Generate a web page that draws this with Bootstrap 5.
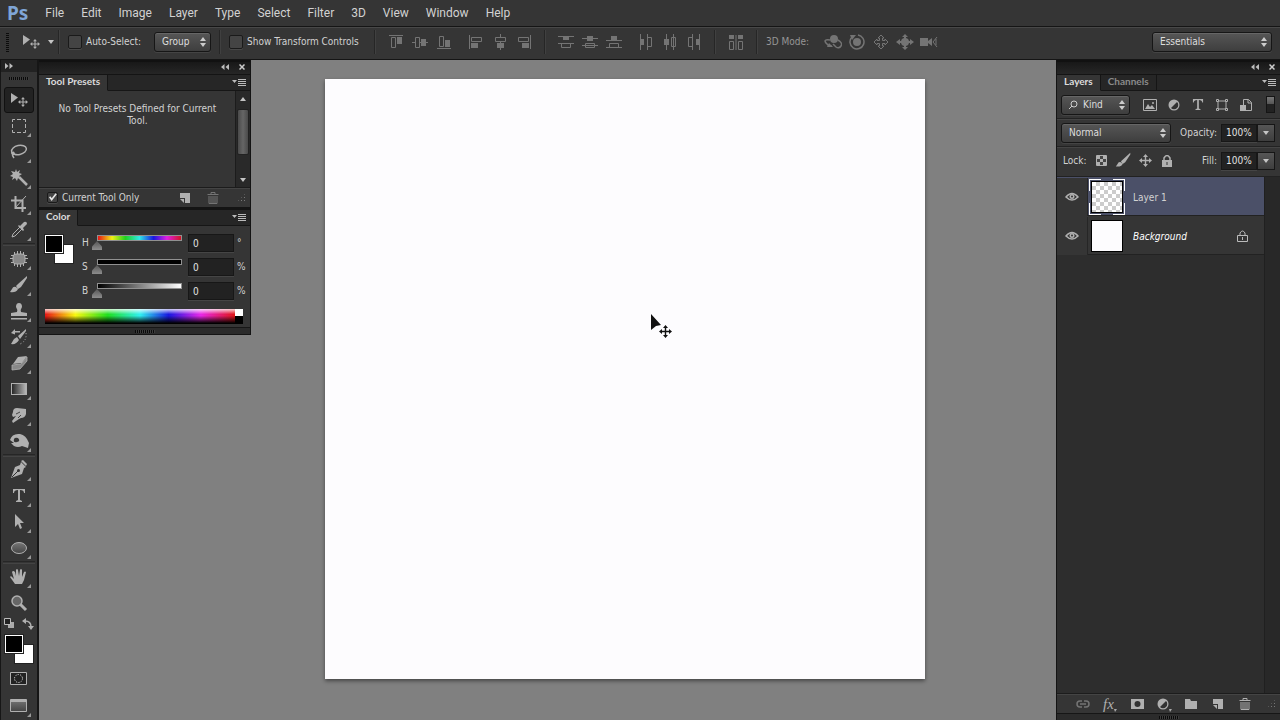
<!DOCTYPE html>
<html lang="en">
<head>
<meta charset="utf-8">
<meta name="viewport" content="width=device-width, initial-scale=1">
<title>Photoshop</title>
<link href="https://cdn.jsdelivr.net/npm/bootstrap@5.3.0/dist/css/bootstrap.min.css" rel="stylesheet">
<style>
:root{--ui:#353535;--lite:#484848;--ink:#d2d2d2;--ico:#b0b0b0}
body{font:10px/12px "DejaVu Sans Condensed","Noto Sans",sans-serif;color:var(--ink);background:#808080}
button{color:inherit}
svg{display:block;flex:none}
.app-menu{background:var(--ui);height:26px;gap:17px;padding:0 7px;font:12px/16px Roboto,"Noto Sans",sans-serif}
.app-menu a{color:var(--ink)}
.ps-logo{font:bold 19px/24px "Noto Sans",sans-serif;color:#7fa5d6}
.options-bar{background:var(--ui);height:34px;border-top:1px solid #151515;border-bottom:1px solid #151515;box-shadow:inset 0 1px var(--lite);padding:0 8px 2px 6px}
.grip-v{width:3px;height:19px;background:repeating-linear-gradient(#0c0c0c 0 1px,var(--ui) 1px 2px)}
.grip-h{width:20px;height:3px;background:repeating-linear-gradient(90deg,#0a0a0a 0 1px,#3c3c3c 1px 2px)}
.sep-v{width:2px;height:24px;background:#262626;border-right:1px solid #404040}
.ibtn{border:0;background:none;padding:0;display:flex;align-items:center;justify-content:center;width:24px;height:24px;color:var(--ico)}
.ibtn-dim{color:#747474}
.ibtn-lock{width:22px}
.move-btn{width:45px;gap:4px}
.auto-label{width:68px}
.group-select{width:57px}
.transform-label{width:127px}
.mode-label{width:55px;color:#969696}
.space-select{width:120px}
.blend-select{width:110px}
.ps-check{appearance:none;width:14px;height:14px;margin:0;border:1px solid #1a1a1a;border-radius:2px;background:#444;box-shadow:0 1px #484848}
.ps-check.small-box{width:11px;height:11px;background:#4a4a4a}
.ps-check:checked{background:#444 url("data:image/svg+xml,%3Csvg xmlns='http://www.w3.org/2000/svg' viewBox='0 0 11 11'%3E%3Cpath d='M2 4.5 4.5 8 10 1' fill='none' stroke='%23e4e4e4' stroke-width='2'/%3E%3C/svg%3E") center/contain}
.ps-select{appearance:none;height:20px;border:1px solid #161616;border-radius:3px;color:#dedede;font:inherit;padding:0 18px 0 7px;box-shadow:0 1px #444,inset 0 1px #666;background:url("data:image/svg+xml,%3Csvg xmlns='http://www.w3.org/2000/svg' width='6' height='10'%3E%3Cpath d='M0 4 3 0l3 4zM0 6h6L3 10z' fill='%23ccc'/%3E%3C/svg%3E") right 4px center/6px 10px no-repeat,linear-gradient(#565656,#3e3e3e)}
.toolbox{width:39px;background:var(--ui);border-left:1px solid #161616;border-right:2px solid #161616}
.toolbox-head{height:12px;background:#222;padding-left:4px}
.toolbox-grip{height:15px;padding-bottom:3px}
.tool{border:1px solid transparent;border-radius:3px;background:none;padding:0;width:30px;height:26px;display:flex;align-items:center;justify-content:center;color:var(--ico)}
.tool.active{background:#222;border-color:#111}
.sep-h{height:3px;width:32px;border-bottom:1px solid #444;border-top:1px solid #262626}
.swap-row{width:30px;height:19px;padding-bottom:4px}
.swatches{display:grid;grid-template-columns:10px 8px 10px;grid-template-rows:10px 8px 10px;justify-content:center}
.tool-chips{margin-bottom:3px}
.chip{border:1px solid #fff;outline:1px solid #222;background:#fff}
.chip-bg{grid-area:2/2/4/4}
.chip-fg{grid-area:1/1/3/3;background:#000;z-index:1}
.float-col{width:212px}
.ps-panel{background:var(--ui);border:1px solid #141414;border-top:0;border-left:0}
.ps-panel + .ps-panel{border-top:1px solid #141414}
.ps-panel-head{height:14px;background:linear-gradient(#181818,#262626);border-top:2px solid #111;padding:0 5px 2px 0;gap:10px}
.tabs-row{background:#262626;height:17px;border-top:1px solid #141414}
.tabs-row .nav-link{color:#8b8b8b;padding:0 7px 2px;font:bold 10px/13px Lato,sans-serif;border-radius:0;border-right:1px solid #151515;border-bottom:1px solid #161616;background:#262626}
.tabs-row .nav-link.active{background:var(--ui);color:#dcdcdc;border-bottom-color:var(--ui)}
.tabs-fill{border-bottom:1px solid #161616}
.preset-area{height:96px}
.preset-msg{padding:12px 12px 0 13px}
.scroller{width:16px;background:#292929;border-left:1px solid #1c1c1c;padding:6px 0 5px}
.scroll-thumb{width:12px;height:46px;border-radius:2px;background:linear-gradient(90deg,#4a4a4a,#666,#4a4a4a);border:1px solid #222}
.panel-foot{height:20px;border-top:1px solid #1c1c1c;box-shadow:inset 0 1px #444}
.color-body{padding:5px 3px 1px 6px}
.color-top{gap:9px}
.hsb{display:grid;grid-template-columns:9px 95px 46px 10px;column-gap:1px;align-items:center}
.hsb-row{display:grid;grid-template-columns:subgrid;grid-column:1/-1;height:24px;align-items:center}
.unit{padding-left:2px}
.ramp{appearance:none;background:none;width:95px;height:16px;margin:0;padding:0}
.ramp::-webkit-slider-runnable-track{height:16px;background:var(--ramp) 6px 1px/calc(100% - 12px) 4px no-repeat,linear-gradient(#919191,#919191) 5px 0/calc(100% - 10px) 6px no-repeat}
.ramp::-webkit-slider-thumb{-webkit-appearance:none;width:10px;height:9px;margin-top:6px;background:linear-gradient(#555,#8d8d8d);clip-path:polygon(50% 0,100% 60%,100% 100%,0 100%,0 60%)}
.num{background:#222;color:#e2e2e2;border:1px solid #171717;box-shadow:0 1px #454545;height:18px;font:inherit;padding:0 4px;min-width:0}
.num-pct{width:36px}
.hue{--ramp:linear-gradient(90deg,#e81515,#f0f015 17%,#20d020 33%,#30e8e8 50%,#1818e0 67%,#e020e0 83%,#d01525)}
.sat{--ramp:linear-gradient(#000,#000)}
.bri{--ramp:linear-gradient(90deg,#000,#fff)}
.spectrum-row{margin:6px 4px 2px 0}
.spectrum{height:15px;background:linear-gradient(#fffc,#fff0 35%,#0000 45%,#000 95%),linear-gradient(90deg,#e81515,#f8f810 16%,#20e020 33%,#30f0f0 50%,#1818e0 65%,#e828e8 82%,#e01515)}
.bw{width:8px;background:linear-gradient(#fff 50%,#000 50%)}
.panel-grip{height:7px;border-top:1px solid #161616;background:#2b2b2b}
.workspace{padding:19px 57px 40px 0}
.artboard{width:600px;max-width:100%;aspect-ratio:1;background:#fdfcfe;box-shadow:0 2px 4px #0007}
.pointer{position:absolute;left:54%;top:39%}
.layers-dock{width:224px;background:var(--ui);border-left:1px solid #141414}
.row-line{height:28px;padding:0 5px 0 4px;border-bottom:1px solid #222;box-shadow:0 1px #444}
.row-last{height:30px;padding-bottom:2px}
.lock-label{width:29px;padding-left:2px}
.kind-select{width:69px;padding-left:21px}
.layer{height:39px;border-bottom:1px solid #222;padding-top:1px}
.layer.selected{background:#4b5068}
.layer-plain{background:#353535}
.eye-cell{width:31px;height:38px;background:var(--ui);border-right:1px solid #262626}
.layer-name{padding-top:3px}
.thumb-frame{width:36px;height:36px;padding:2px;margin:0 8px 0 1px}
.selected .thumb-frame{background:linear-gradient(#fff,#fff) 0 0/12px 1px,linear-gradient(#fff,#fff) 0 0/1px 12px,linear-gradient(#fff,#fff) 100% 0/12px 1px,linear-gradient(#fff,#fff) 100% 0/1px 12px,linear-gradient(#fff,#fff) 0 100%/12px 1px,linear-gradient(#fff,#fff) 0 100%/1px 12px,linear-gradient(#fff,#fff) 100% 100%/12px 1px,linear-gradient(#fff,#fff) 100% 100%/1px 12px;background-repeat:no-repeat}
.layer-thumb{width:32px;height:32px;border:1px solid #000;background:#fdfcfe}
.checker{background:repeating-conic-gradient(#ccc 0 25%,#fff 0 50%) 0 0/8px 8px}
.layer-track{width:16px;background:#282828;border-left:1px solid #202020}
.layer-list{background:#2d2d2d}
.drop{width:18px;height:18px;border:1px solid #161616;background:linear-gradient(#565656,#3e3e3e);padding:0;display:flex;align-items:center;justify-content:center}
.dots{width:9px;height:9px;background:radial-gradient(circle,#777 1px,#0000 1px) 0 0/3px 3px;clip-path:polygon(100% 0,100% 100%,0 100%)}
.filter-switch{width:9px;height:17px;background:linear-gradient(#777,#555 7px,#222 7px);border:1px solid #151515;padding:0}
.foot-tools{gap:3px;padding-left:14px}
.fx{font:italic 15px/16px "Liberation Serif",serif}
</style>
</head>
<body class="d-flex flex-column min-vh-100">
<svg width="0" height="0" class="position-absolute" aria-hidden="true">
<defs>
<linearGradient id="gr"><stop stop-color="#222"/><stop offset="1" stop-color="#bbb"/></linearGradient>
<linearGradient id="gv" x2="0" y2="1"><stop stop-color="#777"/><stop offset="1" stop-color="#444"/></linearGradient>
<symbol id="cross" viewBox="0 0 13 13"><path d="M6.500 0 9 3H7.200v2.800H10V4l3 2.500L10 9V7.200H7.200V10H9l-2.500 3L4 10h1.800V7.200H3V9L0 6.500 3 4v1.800h2.800V3H4z" fill="currentColor"/></symbol>
<symbol id="tri" viewBox="0 0 4 4"><path d="M4 0v4H0z" fill="#999"/></symbol>
<symbol id="move" viewBox="0 0 26 26"><path d="M5 6v10l7-5.500z" fill="currentColor"/><use href="#cross" x="12" y="10" width="10" height="10"/></symbol>
<symbol id="marquee" viewBox="0 0 26 26"><path d="M6.500 9V6.500H9m2 0h4m2 0h2.500V9m0 2v4m0 2v2.500H17m-2 0h-4m-2 0H6.500V17m0-2v-4" fill="none" stroke="currentColor"/><use href="#tri" x="21" y="20" width="4" height="4"/></symbol>
<symbol id="lasso" viewBox="0 0 26 26"><g fill="none" stroke="currentColor" stroke-width="1.500"><ellipse cx="13" cy="11" rx="7.500" ry="4.500" transform="rotate(-12 13 11)"/><path d="M6 13c-1 3 3 3 2 1s-3 1 0 5"/></g><use href="#tri" x="21" y="20" width="4" height="4"/></symbol>
<symbol id="wand" viewBox="0 0 26 26"><path d="m10 4 1 3 3-2-1 3 3 1-3 2 1 3-2-1-1 3-2-3-3 2 1-3-3-1 3-2-2-3 4 1z" fill="currentColor"/><path d="m13 12 8 8" stroke="currentColor" stroke-width="2.500"/><use href="#tri" x="21" y="20" width="4" height="4"/></symbol>
<symbol id="crop" viewBox="0 0 26 26"><path d="M9.500 5v12H20M5 9.500h11.500V21" fill="none" stroke="currentColor" stroke-width="2"/><path d="m9 17 11-12" stroke="currentColor"/><use href="#tri" x="21" y="20" width="4" height="4"/></symbol>
<symbol id="dropper" viewBox="0 0 26 26"><path d="m14 9 4-4q3-1 3 2l-4 4 1 2-1 1-5-5 1-1z" fill="currentColor"/><path d="m14 10-7 7-1 3 3-1 7-7" fill="none" stroke="currentColor"/><use href="#tri" x="21" y="20" width="4" height="4"/></symbol>
<symbol id="heal" viewBox="0 0 26 26"><path d="M8.500 6v14m3-15v16m3-16v16m3-15v14M5 9.500h16m-17 3h18M5 16.500h16" stroke="currentColor"/><rect x="7" y="8" width="12" height="10" rx="3" fill="#888" stroke="currentColor"/><use href="#tri" x="21" y="20" width="4" height="4"/></symbol>
<symbol id="brush" viewBox="0 0 26 26"><path d="m21 4-9 8-2 2 2 3 3-2 6-9zM10 15q-3-1-4 2l-2 3q6 1 8-3z" fill="currentColor"/><use href="#tri" x="21" y="20" width="4" height="4"/></symbol>
<symbol id="stamp" viewBox="0 0 26 26"><path d="M11 14q1-2-1-5 0-4 3-4t3 4q-2 3-1 5l6 1v3H5v-3zM5 20h16v1.500H5z" fill="currentColor"/><use href="#tri" x="21" y="20" width="4" height="4"/></symbol>
<symbol id="history" viewBox="0 0 26 26"><path d="m20 5-8 7 2 3 6-8zM11 13l2 3q-3 5-8 4l3-5zM5 9l4-4v2h5v1.500H9v2z" fill="currentColor"/><path d="M20 9q1 8-6 11" fill="none" stroke="currentColor" stroke-dasharray="1 2"/><use href="#tri" x="21" y="20" width="4" height="4"/></symbol>
<symbol id="eraser" viewBox="0 0 26 26"><path d="m12 7 9-1-5 7-9 1z" fill="currentColor"/><path d="m6 15 9-1 6-7v4l-7 8-8 1z" fill="#888" stroke="currentColor" stroke-width=".8"/><use href="#tri" x="21" y="20" width="4" height="4"/></symbol>
<symbol id="gradient" viewBox="0 0 26 26"><rect x="5.500" y="7.500" width="15" height="11" fill="url(#gr)" stroke="currentColor"/><use href="#tri" x="21" y="20" width="4" height="4"/></symbol>
<symbol id="smudge" viewBox="0 0 26 26"><path d="M7 10q0-4 4-4l9 1v5q-1 4-5 4l-2 1-6 4-1-2 4-5-3 1-1-2z" fill="currentColor"/><path d="m10 12 4-2m-2 6 3-3" stroke="#444"/><use href="#tri" x="21" y="20" width="4" height="4"/></symbol>
<symbol id="dodge" viewBox="0 0 26 26"><path fill-rule="evenodd" d="M4 12q2-7 10-6 6 1 9 9l-1 5-6-2q-4 2-8 0l-3-3 3 0zm4-1q-1 4 3 3 4-1 1-4-3-1-4 1z" fill="currentColor"/><use href="#tri" x="21" y="20" width="4" height="4"/></symbol>
<symbol id="pen" viewBox="0 0 26 26"><path d="m15 5 5 5-2 1-2 6-11 4 4-11 5-2zM17 3l4 4-1 2-5-5z" fill="currentColor"/><path d="m6 20 6-6" stroke="#333"/><circle cx="12.500" cy="13.500" r="1.500" fill="#333"/><use href="#tri" x="21" y="20" width="4" height="4"/></symbol>
<symbol id="type" viewBox="0 0 26 26"><path d="M7 6h12v4h-1q0-3-4-3v10l2 1v1h-6v-1l2-1V7q-4 0-4 3H7z" fill="currentColor"/></symbol>
<symbol id="select" viewBox="0 0 26 26"><path d="M9 5v13l3-3 2 5 2-1-2-5h4z" fill="currentColor"/><use href="#tri" x="21" y="20" width="4" height="4"/></symbol>
<symbol id="ellipse" viewBox="0 0 26 26"><ellipse cx="13" cy="13" rx="7.500" ry="5.500" fill="url(#gv)" stroke="currentColor"/><use href="#tri" x="21" y="20" width="4" height="4"/></symbol>
<symbol id="hand" viewBox="0 0 26 26"><path d="m9 20-5-7q1-2 3 1l1 1-2-7q1-2 3 0l1 4V6q1-2 2 0l1 6 1-6q1-2 2 0v7l2-5q1-1 2 0l-2 8-2 4z" fill="currentColor"/><use href="#tri" x="21" y="20" width="4" height="4"/></symbol>
<symbol id="zoomer" viewBox="0 0 26 26"><path d="m14 14 6 6" stroke="currentColor" stroke-width="3"/><circle cx="11" cy="11" r="5" fill="#666" stroke="currentColor" stroke-width="1.500"/></symbol>
<symbol id="mask" viewBox="0 0 26 26"><path d="M4.500 6.500h16v12h-16z" fill="#222" stroke="currentColor"/><circle cx="12.500" cy="12.500" r="4" fill="none" stroke="#ddd" stroke-dasharray="1.200 1.300"/></symbol>
<symbol id="screen" viewBox="0 0 26 26"><path d="M4.500 7.500h16v12h-16z" fill="url(#gv)" stroke="currentColor"/><path d="M4 9h17" stroke="currentColor" stroke-width="2"/><use href="#tri" x="21" y="21" width="4" height="4"/></symbol>
<symbol id="at" viewBox="0 0 16 16"><path d="M1 1.500h14M3.500 3.500h4v10h-4z" fill="none" stroke="currentColor"/><path d="M9 3h5v7H9z" fill="currentColor"/></symbol>
<symbol id="am" viewBox="0 0 16 16"><path d="M0 8.500h3m4 0h9M3.500 3.500h4v10h-4z" fill="none" stroke="currentColor"/><path d="M9 5h5v7H9z" fill="currentColor"/></symbol>
<symbol id="dist" viewBox="0 0 16 16"><path d="M0 2.500h16M0 9.500h16M3.500 9.500h9v4h-9z" fill="none" stroke="currentColor"/><path d="M5 2h6v4H5z" fill="currentColor"/></symbol>
<symbol id="distm" viewBox="0 0 16 16"><path d="M0 4.500h16M0 11.500h16M3.500 9.500h9v4h-9z" fill="none" stroke="currentColor"/><path d="M5 2h6v5H5z" fill="currentColor"/></symbol>
<symbol id="distb" viewBox="0 0 16 16"><path d="M0 6.500h16M0 13.500h16M3.500 9.500h9v4h-9z" fill="none" stroke="currentColor"/><path d="M5 2h6v5H5z" fill="currentColor"/></symbol>
<symbol id="auto" viewBox="0 0 16 16"><path d="M8 1v15M1.500 7.500h4v8h-4zm9 0h4v8h-4z" fill="none" stroke="currentColor"/><path d="M1 1h5v4H1zm9 0h5v4h-5z" fill="currentColor"/></symbol>
<symbol id="orbit" viewBox="0 0 18 16"><circle cx="10" cy="5" r="4" fill="currentColor"/><path d="M6 6Q-1 5 2 9t6 3m6-6q5 3 3 6t-5 1l-3-3" fill="none" stroke="currentColor" stroke-width="1.500"/><path d="M3 13h6l-4-4z" fill="currentColor"/></symbol>
<symbol id="roll" viewBox="0 0 18 16"><circle cx="9" cy="8" r="4" fill="currentColor"/><path d="M4 3a7 7 0 1 0 6-2" fill="none" stroke="currentColor" stroke-width="1.500"/><path d="M2 1h6L4 6z" fill="currentColor"/></symbol>
<symbol id="pan" viewBox="0 0 16 16"><path d="M8 1l3 3H9.500v2.500H12V5l3 3-3 3V9.500H9.500V12H11l-3 3-3-3h1.500V9.500H4V11L1 8l3-3v1.500h2.500V4H5z" fill="none" stroke="currentColor"/></symbol>
<symbol id="slide" viewBox="0 0 18 16"><circle cx="9" cy="8" r="4" fill="currentColor"/><path d="m9 0 3 3H6zm0 16 3-3H6zM0 8l4-3v6zm18 0-4-3v6z" fill="currentColor"/><path d="M2 8h14M9 2v12" stroke="currentColor" stroke-width="2"/></symbol>
<symbol id="cam" viewBox="0 0 18 16"><path d="M0 4h8v3l4-3v8L8 9v3H0z" fill="currentColor"/><path d="m17 3-4 5 4 5m-1-8v6" fill="none" stroke="currentColor"/></symbol>
<symbol id="menu" viewBox="0 0 14 9"><path d="M0 2h5L2.500 5z" fill="#bbb"/><path d="M6 1.500h8m-8 2h8m-8 2h8m-8 2h8" stroke="#bbb"/></symbol>
<symbol id="left2" viewBox="0 0 8 6"><path d="M3.500 0v6L0 3zM8 0v6L4.500 3z" fill="#bbb"/></symbol>
<symbol id="close" viewBox="0 0 6 6"><path d="m.5.5 5 5m0-5-5 5" stroke="#ccc" stroke-width="1.500"/></symbol>
<symbol id="page" viewBox="0 0 12 12"><path d="M1 1h10v10H6V6H1z" fill="currentColor"/><path d="M1 7h4v4z" fill="currentColor"/></symbol>
<symbol id="trash" viewBox="0 0 12 12"><path d="M4 2V.5h4V2M.5 2.500h11M2 4v7.500h8V4M4 4v7m2-7v7m2-7v7" fill="none" stroke="currentColor"/></symbol>
<symbol id="half" viewBox="0 0 12 12"><circle cx="6" cy="6" r="5.500" fill="currentColor"/><path d="M3 9a4 4 0 0 0 6-6z" fill="#333"/></symbol>
<symbol id="eye" viewBox="0 0 14 10"><path d="M1 5q6-7 12 0-6 6-12 0z" fill="none" stroke="currentColor" stroke-width="1.500"/><circle cx="7" cy="4.500" r="2.500" fill="currentColor"/><circle cx="7" cy="4.500" r="1" fill="#333"/></symbol>
<symbol id="down" viewBox="0 0 6 4"><path d="M0 0h6L3 4z" fill="#c5c5c5"/></symbol>
</defs></svg>

<nav class="app-menu d-flex align-items-center" aria-label="Main menu">
<span class="ps-logo">Ps</span>
<a href="#" class="text-decoration-none">File</a><a href="#" class="text-decoration-none">Edit</a><a href="#" class="text-decoration-none">Image</a><a href="#" class="text-decoration-none">Layer</a><a href="#" class="text-decoration-none">Type</a><a href="#" class="text-decoration-none">Select</a><a href="#" class="text-decoration-none">Filter</a><a href="#" class="text-decoration-none">3D</a><a href="#" class="text-decoration-none">View</a><a href="#" class="text-decoration-none">Window</a><a href="#" class="text-decoration-none">Help</a>
</nav>

<div class="options-bar d-flex align-items-center">
<span class="grip-v"></span>
<button class="ibtn move-btn ms-1" aria-label="Current tool"><svg width="26" height="26"><use href="#move"/></svg><svg width="6" height="4"><use href="#down"/></svg></button>
<span class="sep-v me-2"></span>
<input type="checkbox" class="ps-check" id="auto-select"><label for="auto-select" class="auto-label ms-1">Auto-Select:</label>
<select class="ps-select group-select" aria-label="Auto-select target"><option>Group</option></select>
<span class="sep-v mx-2"></span>
<input type="checkbox" class="ps-check" id="transform"><label for="transform" class="transform-label ms-1 text-nowrap">Show Transform Controls</label>
<span class="sep-v me-2"></span>
<button class="ibtn ibtn-dim" aria-label="Align top"><svg width="16" height="16"><use href="#at"/></svg></button>
<button class="ibtn ibtn-dim" aria-label="Align middle"><svg width="16" height="16"><use href="#am"/></svg></button>
<button class="ibtn ibtn-dim me-2" aria-label="Align bottom"><svg width="16" height="16"><use href="#at" transform="matrix(1 0 0 -1 0 16)"/></svg></button>
<button class="ibtn ibtn-dim" aria-label="Align left"><svg width="16" height="16"><use href="#at" transform="matrix(0 1 1 0 0 0)"/></svg></button>
<button class="ibtn ibtn-dim" aria-label="Align centre"><svg width="16" height="16"><use href="#am" transform="matrix(0 -1 1 0 0 16) rotate(180 8 8) matrix(1 0 0 -1 0 16)"/></svg></button>
<button class="ibtn ibtn-dim me-2" aria-label="Align right"><svg width="16" height="16"><use href="#at" transform="matrix(0 1 -1 0 16 0)"/></svg></button>
<span class="sep-v me-2"></span>
<button class="ibtn ibtn-dim" aria-label="Distribute top"><svg width="16" height="16"><use href="#dist"/></svg></button>
<button class="ibtn ibtn-dim" aria-label="Distribute middle"><svg width="16" height="16"><use href="#distm"/></svg></button>
<button class="ibtn ibtn-dim me-2" aria-label="Distribute bottom"><svg width="16" height="16"><use href="#distb"/></svg></button>
<button class="ibtn ibtn-dim" aria-label="Distribute left"><svg width="16" height="16"><use href="#dist" transform="matrix(0 1 -1 0 16 0) rotate(180 8 8)"/></svg></button>
<button class="ibtn ibtn-dim" aria-label="Distribute centre"><svg width="16" height="16"><use href="#distm" transform="matrix(0 1 -1 0 16 0) rotate(180 8 8)"/></svg></button>
<button class="ibtn ibtn-dim me-2" aria-label="Distribute right"><svg width="16" height="16"><use href="#dist" transform="matrix(0 1 -1 0 16 0)"/></svg></button>
<span class="sep-v me-2"></span>
<button class="ibtn ibtn-dim me-2" aria-label="Auto-align"><svg width="16" height="16"><use href="#auto"/></svg></button>
<span class="sep-v me-2"></span>
<span class="mode-label">3D Mode:</span>
<button class="ibtn ibtn-dim" aria-label="Orbit"><svg width="18" height="16"><use href="#orbit"/></svg></button>
<button class="ibtn ibtn-dim" aria-label="Roll"><svg width="18" height="16"><use href="#roll"/></svg></button>
<button class="ibtn ibtn-dim" aria-label="Pan"><svg width="16" height="16"><use href="#pan"/></svg></button>
<button class="ibtn ibtn-dim" aria-label="Slide"><svg width="18" height="16"><use href="#slide"/></svg></button>
<button class="ibtn ibtn-dim" aria-label="Zoom camera"><svg width="18" height="16"><use href="#cam"/></svg></button>
<select class="ps-select space-select ms-auto" aria-label="Workspace"><option>Essentials</option></select>
</div>

<main class="d-flex flex-grow-1 align-items-stretch position-relative">
<aside class="toolbox d-flex flex-column align-items-center" aria-label="Tools">
<div class="toolbox-head w-100 d-flex align-items-center"><svg width="8" height="6"><use href="#left2" transform="matrix(-1 0 0 1 8 0)"/></svg></div>
<div class="toolbox-grip d-flex align-items-center"><span class="grip-h"></span></div>
<button class="tool active" aria-label="Move"><svg width="26" height="26"><use href="#move"/></svg></button>
<button class="tool" aria-label="Marquee"><svg width="26" height="26"><use href="#marquee"/></svg></button>
<button class="tool" aria-label="Lasso"><svg width="26" height="26"><use href="#lasso"/></svg></button>
<button class="tool" aria-label="Magic wand"><svg width="26" height="26"><use href="#wand"/></svg></button>
<button class="tool" aria-label="Crop"><svg width="26" height="26"><use href="#crop"/></svg></button>
<button class="tool" aria-label="Eyedropper"><svg width="26" height="26"><use href="#dropper"/></svg></button>
<span class="sep-h"></span>
<button class="tool" aria-label="Healing"><svg width="26" height="26"><use href="#heal"/></svg></button>
<button class="tool" aria-label="Brush"><svg width="26" height="26"><use href="#brush"/></svg></button>
<button class="tool" aria-label="Clone stamp"><svg width="26" height="26"><use href="#stamp"/></svg></button>
<button class="tool" aria-label="History brush"><svg width="26" height="26"><use href="#history"/></svg></button>
<button class="tool" aria-label="Eraser"><svg width="26" height="26"><use href="#eraser"/></svg></button>
<button class="tool" aria-label="Gradient"><svg width="26" height="26"><use href="#gradient"/></svg></button>
<button class="tool" aria-label="Smudge"><svg width="26" height="26"><use href="#smudge"/></svg></button>
<button class="tool" aria-label="Sponge"><svg width="26" height="26"><use href="#dodge"/></svg></button>
<span class="sep-h"></span>
<button class="tool" aria-label="Pen"><svg width="26" height="26"><use href="#pen"/></svg></button>
<button class="tool" aria-label="Type"><svg width="26" height="26"><use href="#type"/><use href="#tri" x="21" y="20" width="4" height="4"/></svg></button>
<button class="tool" aria-label="Path selection"><svg width="26" height="26"><use href="#select"/></svg></button>
<button class="tool" aria-label="Ellipse"><svg width="26" height="26"><use href="#ellipse"/></svg></button>
<span class="sep-h"></span>
<button class="tool" aria-label="Hand"><svg width="26" height="26"><use href="#hand"/></svg></button>
<button class="tool" aria-label="Zoom"><svg width="26" height="26"><use href="#zoomer"/></svg></button>
<div class="swap-row d-flex justify-content-between align-items-center">
<svg width="11" height="11"><path d="M4 4h6v6H4z" fill="#aaa"/><path d="M.5.5h6v6h-6z" fill="#222" stroke="#bbb"/></svg>
<svg width="12" height="12" fill="none" stroke="#b0b0b0" stroke-width="1.500"><path d="M3 3q6 0 6 6"/><path d="M4 0v6L0 3zm2 8h6l-3 4z" fill="#b0b0b0" stroke="none"/></svg>
</div>
<div class="swatches tool-chips"><span class="chip chip-bg"></span><span class="chip chip-fg"></span></div>
<button class="tool" aria-label="Quick mask"><svg width="26" height="26"><use href="#mask"/></svg></button>
<button class="tool" aria-label="Screen mode"><svg width="26" height="26"><use href="#screen"/></svg></button>
</aside>

<aside class="float-col flex-shrink-0">
<section class="ps-panel">
<div class="ps-panel-head d-flex justify-content-end align-items-center"><svg width="8" height="6"><use href="#left2"/></svg><svg width="6" height="6"><use href="#close"/></svg></div>
<div class="tabs-row d-flex"><a href="#" class="nav-link active">Tool Presets</a><div class="tabs-fill flex-grow-1 d-flex justify-content-end align-items-center pe-1"><svg width="14" height="9"><use href="#menu"/></svg></div></div>
<div class="preset-area d-flex">
<div class="preset-msg flex-grow-1 text-center">No Tool Presets Defined for Current Tool.</div>
<div class="scroller d-flex flex-column align-items-center"><svg width="6" height="4" class="mb-2"><use href="#down" transform="matrix(1 0 0 -1 0 4)"/></svg><div class="scroll-thumb"></div><svg width="6" height="4" class="mt-auto"><use href="#down"/></svg></div>
</div>
<div class="panel-foot d-flex align-items-center ps-2"><input type="checkbox" checked class="ps-check small-box" id="current-only"><label for="current-only" class="ms-1 me-auto">Current Tool Only</label>
<button class="ibtn" aria-label="New preset"><svg width="12" height="12"><use href="#page"/></svg></button><button class="ibtn ibtn-dim mx-1" aria-label="Delete preset"><svg width="12" height="12"><use href="#trash"/></svg></button><span class="dots ms-2 me-1"></span></div>
</section>
<section class="ps-panel">
<div class="tabs-row d-flex"><a href="#" class="nav-link active">Color</a><div class="tabs-fill flex-grow-1 d-flex justify-content-end align-items-center pe-1"><svg width="14" height="9"><use href="#menu"/></svg></div></div>
<div class="color-body">
<div class="color-top d-flex align-items-start">
<div class="swatches mt-1"><span class="chip chip-bg"></span><span class="chip chip-fg"></span></div>
<div class="hsb">
<div class="hsb-row"><label for="h">H</label><input id="h" type="range" class="ramp hue" min="0" max="360" value="0"><input class="num" value="0" aria-label="Hue"><span class="unit">°</span></div>
<div class="hsb-row"><label for="s">S</label><input id="s" type="range" class="ramp sat" value="0"><input class="num" value="0" aria-label="Saturation"><span class="unit">%</span></div>
<div class="hsb-row"><label for="b">B</label><input id="b" type="range" class="ramp bri" value="0"><input class="num" value="0" aria-label="Brightness"><span class="unit">%</span></div>
</div>
</div>
<div class="spectrum-row d-flex"><div class="spectrum flex-grow-1"></div><div class="bw"></div></div>
</div>
<div class="panel-grip d-flex justify-content-center align-items-center"><span class="grip-h"></span></div>
</section>
</aside>

<section class="workspace flex-grow-1 d-flex justify-content-center align-items-start">
<div class="artboard position-relative"><svg class="pointer" width="26" height="28"><path d="M2 1v16l5-4 5-1z" fill="#111"/><use href="#cross" x="10" y="12" width="13" height="13" color="#111"/></svg></div>
</section>

<aside class="layers-dock d-flex flex-column flex-shrink-0">
<div class="ps-panel-head d-flex justify-content-end align-items-center"><svg width="8" height="6"><use href="#left2"/></svg><svg width="6" height="6"><use href="#close"/></svg></div>
<div class="tabs-row d-flex"><a href="#" class="nav-link active">Layers</a><a href="#" class="nav-link">Channels</a><div class="tabs-fill flex-grow-1 d-flex justify-content-end align-items-center pe-1"><svg width="14" height="9"><use href="#menu"/></svg></div></div>
<div class="row-line d-flex align-items-center">
<div class="position-relative"><select class="ps-select kind-select" aria-label="Filter kind"><option>Kind</option></select><svg class="position-absolute top-50 start-0 translate-middle-y ms-2" width="9" height="10" fill="none" stroke="#ccc"><circle cx="5" cy="4" r="3"/><path d="M3 6 0 9"/></svg></div>
<div class="d-flex ms-2 me-auto">
<button class="ibtn" aria-label="Pixel layers"><svg width="14" height="12"><path d="M.5.5h13v11H.5z" fill="none" stroke="currentColor"/><path d="m2 10 3-5 2 3 2-2 3 4z" fill="currentColor"/><circle cx="10" cy="4" r="1" fill="currentColor"/></svg></button>
<button class="ibtn" aria-label="Adjustment layers"><svg width="12" height="12"><use href="#half"/></svg></button>
<button class="ibtn" aria-label="Type layers"><svg width="22" height="22"><use href="#type"/></svg></button>
<button class="ibtn" aria-label="Shape layers"><svg width="12" height="12" fill="none" stroke="currentColor"><path d="M2 2h8v8H2z"/><path d="M.5.5h2v2h-2zm9 0h2v2h-2zm0 9h2v2h-2zm-9 0h2v2h-2z" fill="#333"/></svg></button>
<button class="ibtn" aria-label="Smart objects"><svg width="12" height="12"><path d="M3.500 6V.5h5l3 3v8H6M8 .5V4h3.500" fill="none" stroke="currentColor"/><path d="M0 6h6v6H0z" fill="currentColor"/></svg></button>
</div>
<button class="filter-switch" aria-label="Toggle filter"></button>
</div>
<div class="row-line d-flex align-items-center"><select class="ps-select blend-select" aria-label="Blend mode"><option>Normal</option></select><label for="opacity" class="ms-auto me-1">Opacity:</label><input id="opacity" class="num num-pct" value="100%"><button class="drop" aria-label="Opacity slider"><svg width="6" height="4"><use href="#down"/></svg></button></div>
<div class="row-line row-last d-flex align-items-center"><span class="lock-label">Lock:</span>
<button class="ibtn ibtn-lock" aria-label="Lock transparency"><svg width="11" height="11"><path d="M.5.5h10v10H.5z" fill="#444" stroke="currentColor"/><path d="M1 1h3v3H1zm6 0h3v3H7zM4 4h3v3H4zM1 7h3v3H1zm6 0h3v3H7z" fill="currentColor"/></svg></button>
<button class="ibtn ibtn-lock" aria-label="Lock pixels"><svg width="17" height="17" viewBox="3 3 20 20"><path d="m21 4-9 8-2 2 2 3 3-2 6-9zM10 15q-3-1-4 2l-2 3q6 1 8-3z" fill="currentColor"/></svg></button>
<button class="ibtn ibtn-lock" aria-label="Lock position"><svg width="13" height="13"><use href="#cross"/></svg></button>
<button class="ibtn ibtn-lock" aria-label="Lock all"><svg width="10" height="12"><path d="M2 6V3q3-5 6 0v3" fill="none" stroke="currentColor" stroke-width="1.500"/><path d="M0 5h10v7H0z" fill="currentColor"/><path d="M5 7v3" stroke="#333"/></svg></button>
<label for="fill" class="ms-auto me-1">Fill:</label><input id="fill" class="num num-pct" value="100%"><button class="drop" aria-label="Fill slider"><svg width="6" height="4"><use href="#down"/></svg></button></div>
<div class="layer-list flex-grow-1 d-flex">
<div class="flex-grow-1">
<div class="layer selected d-flex align-items-center"><button class="ibtn eye-cell" aria-label="Hide Layer 1"><svg width="14" height="10"><use href="#eye"/></svg></button><div class="thumb-frame"><div class="layer-thumb checker"></div></div><span class="layer-name">Layer 1</span></div>
<div class="layer layer-plain d-flex align-items-center"><button class="ibtn eye-cell" aria-label="Hide Background"><svg width="14" height="10"><use href="#eye"/></svg></button><div class="thumb-frame"><div class="layer-thumb"></div></div><em class="layer-name me-auto text-white">Background</em><svg class="me-3" width="11" height="12" fill="none" stroke="#bbb"><path d="M3 5V3q2.500-4 5 0v2M.5 5.500h10v6H.5zM5.500 7v3"/></svg></div>
</div>
<div class="layer-track"></div>
</div>
<div class="panel-foot d-flex align-items-center">
<div class="foot-tools d-flex flex-grow-1 align-items-center">
<button class="ibtn ibtn-dim" aria-label="Link layers"><svg width="14" height="8" fill="none" stroke="currentColor" stroke-width="1.500"><path d="M6 1H4Q1 1 1 4t3 3h2m2-6h2q3 0 3 3t-3 3H8M4 4h6"/></svg></button>
<button class="ibtn" aria-label="Layer style"><em class="fx">fx</em><svg width="3" height="3" class="align-self-end mb-1"><path d="M0 0h3L1 3z" fill="#aaa"/></svg></button>
<button class="ibtn" aria-label="Add mask"><svg width="13" height="10"><path d="M0 0h13v10H0z" fill="currentColor"/><circle cx="6.500" cy="5" r="3" fill="#333"/></svg></button>
<button class="ibtn" aria-label="New adjustment"><svg width="12" height="12"><use href="#half"/></svg><svg width="3" height="3" class="align-self-end mb-1"><path d="M0 0h3L1 3z" fill="#aaa"/></svg></button>
<button class="ibtn" aria-label="New group"><svg width="12" height="10"><path d="M0 0h5l1 2h6v8H0z" fill="currentColor"/></svg></button>
<button class="ibtn" aria-label="New layer"><svg width="12" height="12"><use href="#page"/></svg></button>
<button class="ibtn" aria-label="Delete layer"><svg width="12" height="12"><use href="#trash"/></svg></button>
</div><span class="dots me-1"></span></div>
<div class="panel-grip d-flex justify-content-center align-items-center"><span class="grip-h"></span></div>
</aside>
</main>
<script src="https://cdn.jsdelivr.net/npm/bootstrap@5.3.0/dist/js/bootstrap.bundle.min.js"></script>
</body>
</html>
